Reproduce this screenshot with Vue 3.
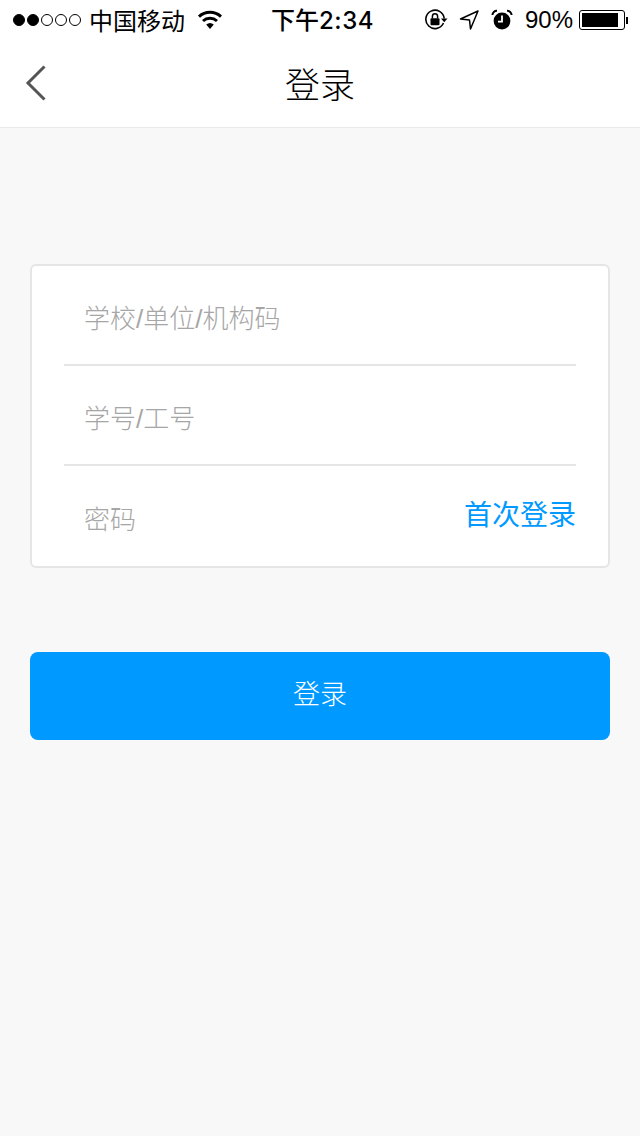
<script setup>
const fields = [
  { id: 1, text: '学校/单位/机构码' },
  { id: 2, text: '学号/工号' },
]
const dots = [true, true, false, false, false]
</script>

<template>
  <div class="page">
    <header class="status">
      <div class="status-left">
        <div class="dots">
          <span v-for="(on, i) in dots" :key="i" class="dot" :class="{ on }"></span>
        </div>
        <span class="carrier">中国移动</span>
        <svg class="wifi" width="26" height="20" viewBox="0 0 26 20">
          <path d="M13 19 L9.2 14.6 A5.8 5.8 0 0 1 16.8 14.6 Z" fill="#000" />
          <path d="M6 11 A10.4 10.4 0 0 1 20 11" fill="none" stroke="#000" stroke-width="3" />
          <path d="M2 6.6 A16.4 16.4 0 0 1 24 6.6" fill="none" stroke="#000" stroke-width="3" />
        </svg>
      </div>
      <div class="time">下午<span class="digits">2:34</span></div>
      <div class="status-right">
        <svg class="ico lock" width="24" height="22" viewBox="0 0 24 22">
          <path d="M19.5 14 A9.2 9.2 0 1 1 20.2 9.5" fill="none" stroke="#000" stroke-width="1.6" />
          <path d="M17 9.5 H23.5 L20.2 13.2 Z" fill="#000" />
          <rect x="6.5" y="9.2" width="9" height="7" rx="1" fill="#000" />
          <path d="M8.4 9.5 V7.4 A2.6 2.6 0 0 1 13.6 7.4 V9.5" fill="none" stroke="#000" stroke-width="1.5" />
        </svg>
        <svg class="ico loc" width="20" height="20" viewBox="0 0 20 20">
          <path d="M19 1 L1.5 9 L10.5 10 L11.5 19 Z" fill="none" stroke="#000" stroke-width="1.5" stroke-linejoin="round" />
        </svg>
        <svg class="ico alarm" width="22" height="22" viewBox="0 0 22 22">
          <circle cx="11" cy="12" r="8.4" fill="#000" />
          <path d="M11 6.5 V12.6 H7" fill="none" stroke="#fff" stroke-width="1.8" />
          <path d="M1.4 6 A4.4 4.4 0 0 1 6 1.8 M20.6 6 A4.4 4.4 0 0 0 16 1.8" fill="none" stroke="#000" stroke-width="2" />
        </svg>
        <span class="pct">90%</span>
        <div class="battery">
          <div class="battery-body"><div class="battery-fill"></div></div>
          <div class="battery-tip"></div>
        </div>
      </div>
    </header>

    <nav class="nav">
      <button class="back" aria-label="返回">
        <svg width="22" height="36" viewBox="0 0 22 36">
          <path d="M19.5 1.5 L3 18 L19.5 34.5" fill="none" stroke="#555" stroke-width="3" />
        </svg>
      </button>
      <h1 class="title">登录</h1>
    </nav>

    <main class="main">
      <section class="card">
        <div v-for="f in fields" :key="f.id" class="row">
          <span class="ph">{{ f.text }}</span>
        </div>
        <div class="row last">
          <span class="ph">密码</span>
          <a class="first">首次登录</a>
        </div>
      </section>
      <button class="submit">登录</button>
    </main>
  </div>
</template>

<style scoped>
.page {
  width: 640px;
  height: 1136px;
  background: #f8f8f8;
  font-family: "Noto Sans CJK SC", "Noto Sans", sans-serif;
  display: flex;
  flex-direction: column;
  overflow: hidden;
}
.status {
  height: 40px;
  background: #fff;
  display: flex;
  align-items: center;
  padding: 0 12px 0 13px;
  color: #000;
  position: relative;
}
.status-left {
  flex: 1;
  display: flex;
  align-items: center;
}
.dots {
  display: flex;
  gap: 2px;
}
.dot {
  width: 12px;
  height: 12px;
  border-radius: 50%;
  border: 1.2px solid #000;
  box-sizing: border-box;
}
.dot.on {
  background: #000;
}
.carrier {
  margin-left: 8px;
  font-size: 24px;
  line-height: 40px;
  font-weight: 400;
}
.wifi {
  margin-left: 12px;
  margin-top: -1px;
}
.time {
  font-size: 24px;
  line-height: 40px;
  font-weight: 500;
  width: 102px;
  white-space: nowrap;
  margin-right: 51px;
}
.digits {
  font-family: "Inter", "Liberation Sans", sans-serif;
  font-weight: 500;
  letter-spacing: 0.6px;
}
.status-right {
  display: flex;
  align-items: center;
}
.ico {
  flex: none;
}
.lock {
  margin-right: 11px;
}
.loc {
  margin-right: 12px;
}
.alarm {
  margin-right: 12px;
}
.pct {
  font-family: "Liberation Sans", sans-serif;
  font-size: 24px;
  line-height: 40px;
}
.battery {
  display: flex;
  align-items: center;
  margin-left: 6px;
}
.battery-body {
  width: 46px;
  height: 20px;
  box-sizing: border-box;
  border: 1.5px solid #000;
  border-radius: 3px;
  padding: 2px;
}
.battery-fill {
  width: 90%;
  height: 100%;
  background: #000;
}
.battery-tip {
  width: 2px;
  height: 7px;
  background: #000;
  margin-left: 1px;
}
.nav {
  height: 88px;
  box-sizing: border-box;
  background: #fff;
  border-bottom: 1px solid #e9e9e9;
  display: flex;
  align-items: center;
  justify-content: center;
  position: relative;
}
.back {
  position: absolute;
  left: 25px;
  top: 25px;
  padding: 0;
  border: 0;
  background: none;
  display: flex;
}
.title {
  margin: 0;
  font-size: 35px;
  font-weight: 300;
  color: #000;
  line-height: 88px;
  margin-top: -2px;
}
.main {
  padding: 136px 30px 0;
  display: flex;
  flex-direction: column;
}
.card {
  box-sizing: border-box;
  height: 304px;
  background: #fff;
  border: 2px solid #e5e5e5;
  border-radius: 6px;
  padding: 0 32px;
  display: flex;
  flex-direction: column;
}
.row {
  height: 100px;
  box-sizing: border-box;
  border-bottom: 2px solid #e5e5e5;
  padding-left: 20px;
  display: flex;
  align-items: center;
  justify-content: space-between;
}
.row.last {
  border-bottom: 0;
}
.ph {
  font-family: "Liberation Sans", "Noto Sans CJK SC", sans-serif;
  font-size: 26px;
  font-weight: 300;
  color: #a6a6a6;
  margin-top: 2px;
}
.first {
  font-size: 28px;
  font-weight: 400;
  color: #0099ff;
  margin-top: -6px;
}
.submit {
  margin-top: 84px;
  height: 88px;
  border: 0;
  border-radius: 8px;
  background: #0099ff;
  color: #fff;
  font-family: inherit;
  font-size: 27px;
  font-weight: 300;
  padding: 0 0 8px;
}
</style>
